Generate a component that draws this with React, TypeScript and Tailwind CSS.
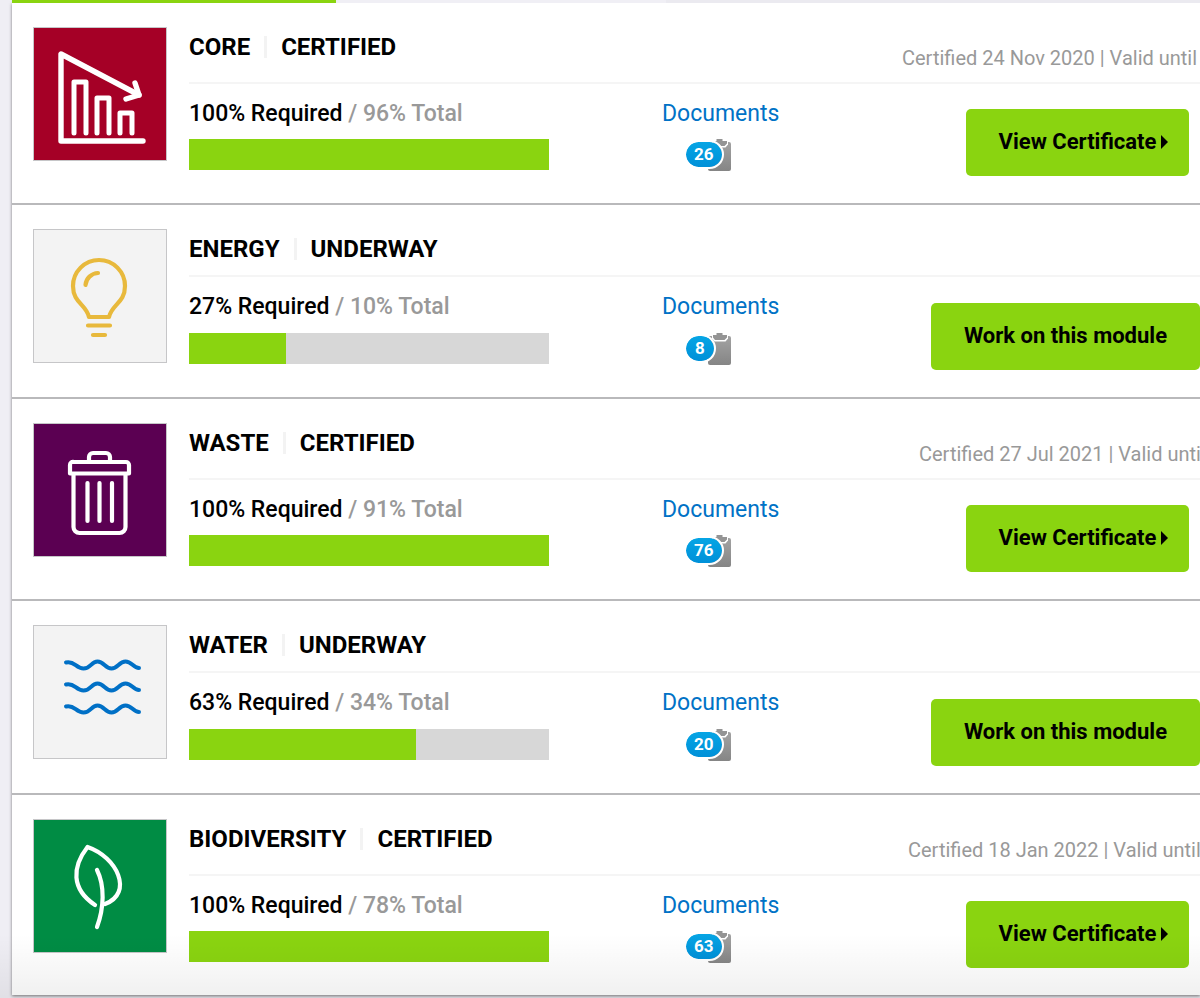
import type { ReactNode } from "react";

type Module = {
  name: string;
  certified?: { text: string; width: string };
  required: number;
  total: number;
  documents: number;
  tile: string;
  icon: ReactNode;
};

const iconProps = {
  className: "block size-full",
  fill: "none",
  strokeLinecap: "round" as const,
  strokeLinejoin: "round" as const,
  "aria-hidden": true,
};

const CoreIcon = () => (
  <svg {...iconProps} viewBox="0 0 132 132" stroke="#fff" strokeWidth="5.4">
    <path d="M105 67 27 26V113H109" />
    <path d="M101 55 105 67 92 71" />
    <path strokeWidth="5" d="M40 105V54H52V105M63 105V70H75V105M86 105V85H98V105" />
  </svg>
);

const EnergyIcon = () => (
  <svg {...iconProps} viewBox="0 0 132 132" stroke="#e8b93c" strokeWidth="4.2">
    <path d="M55 87C52 74 39 73 39 56A26 26 0 0 1 91 56C91 73 78 74 75 87Z" />
    <path d="M51.5 55A13 13 0 0 1 64 43M54 95.5H76M59 105H71" />
  </svg>
);

const WasteIcon = () => (
  <svg {...iconProps} viewBox="0 0 132 132" stroke="#fff" strokeWidth="4.2">
    <path d="M55 37V33A4 4 0 0 1 59 29H72A4 4 0 0 1 76 33V37" />
    <path d="M40 38H92A3 3 0 0 1 95 41V49.5H36V41A3 3 0 0 1 40 38Z" />
    <path d="M39.5 50V103A6 6 0 0 0 45.5 109H85.5A6 6 0 0 0 91.5 103V50" />
    <path d="M53.5 59V97M65.5 59V97M78 59V97" />
  </svg>
);

const WaterIcon = () => (
  <svg {...iconProps} viewBox="0 0 132 132" stroke="#0070c6" strokeWidth="4">
    {[0, 22, 44].map((y) => (
      <path
        key={y}
        transform={`translate(0 ${y})`}
        d="M32 36.5C40 34 42 42.5 49.5 42.5S57 35.5 63.5 35.5 71 42.5 77.5 42.5 85 35.5 91.5 35.5 99 42 105 42"
      />
    ))}
  </svg>
);

const LeafIcon = () => (
  <svg {...iconProps} viewBox="0 0 132 132" stroke="#fff" strokeWidth="4.2">
    <path d="M61 85C37 69 38 47 53.5 27 83 37 100 73 71 84" />
    <path d="M63 50C71 66 70 88 63 107" />
  </svg>
);

const modules: Module[] = [
  {
    name: "CORE",
    certified: { text: "Certified 24 Nov 2020 | Valid until", width: "w-[298px]" },
    required: 100,
    total: 96,
    documents: 26,
    tile: "bg-[#a50026]",
    icon: <CoreIcon />,
  },
  { name: "ENERGY", required: 27, total: 10, documents: 8, tile: "bg-[#f3f3f3]", icon: <EnergyIcon /> },
  {
    name: "WASTE",
    certified: { text: "Certified 27 Jul 2021 | Valid until", width: "w-[281px]" },
    required: 100,
    total: 91,
    documents: 76,
    tile: "bg-[#5b0052]",
    icon: <WasteIcon />,
  },
  { name: "WATER", required: 63, total: 34, documents: 20, tile: "bg-[#f3f3f3]", icon: <WaterIcon /> },
  {
    name: "BIODIVERSITY",
    certified: { text: "Certified 18 Jan 2022 | Valid until", width: "w-[292px]" },
    required: 100,
    total: 78,
    documents: 63,
    tile: "bg-[#008c44]",
    icon: <LeafIcon />,
  },
];

function Documents({ count, gap }: { count: number; gap: string }) {
  return (
    <div className="w-[116px]">
      <a href="#documents" className="block text-[23px] leading-7 text-[#0072c6]">
        Documents
      </a>
      <div className={`relative ml-6 h-8 w-[45px] ${gap}`}>
        <svg className="absolute right-0 top-0 h-8 w-[23px]" viewBox="0 0 23 32" aria-hidden="true">
          <defs>
            <linearGradient id="clip" x2="0" y2="1">
              <stop stopColor="#a3a3a3" />
              <stop offset="1" stopColor="#858585" />
            </linearGradient>
          </defs>
          <rect y="3" width="23" height="29" rx="2" fill="url(#clip)" />
          <path d="M4 2.5H20V5.500L17.500 8.500H6.500L4 5.500Z" fill="#fff" />
          <path d="M5 2H8.5V0H14.5V2H19V4.500L16.500 7H7L5 4.500Z" fill="#949494" />
        </svg>
        <span className="absolute left-0 top-[3px] min-w-7 rounded-full bg-linear-to-b from-[#06a5e5] to-[#0090d8] px-2 text-center text-[17px] leading-[25px] font-bold text-white outline-2 outline-white">
          {count}
        </span>
      </div>
    </div>
  );
}

function ModuleRow({ module }: { module: Module }) {
  const { name, certified, required, total, documents, tile, icon } = module;
  const gap = certified ? "mt-[11px]" : "mt-3";
  return (
    <li className="flex gap-[22px] border-b-2 border-[#b9b9bb] bg-white pl-[21px] last:border-b-0">
      <div className={`mt-6 size-[134px] shrink-0 border border-[#c6c6c8] ${tile}`}>{icon}</div>
      <div className="min-w-0 flex-1">
        <div
          className={`flex justify-between border-b-2 border-[#f5f5f5] whitespace-nowrap ${certified ? "h-[81px]" : "h-[72px]"}`}
        >
          <h2 className="flex h-fit items-center pt-[29px] text-[24px] leading-[30px] font-bold">
            {name}
            <span className="mx-[14px] h-[22px] w-[3px] bg-[#f3f3f3]" />
            {certified ? "CERTIFIED" : "UNDERWAY"}
          </h2>
          {certified && (
            <p className={`overflow-hidden pt-[43px] text-[20px] leading-6 text-[#999] ${certified.width}`}>
              {certified.text}
            </p>
          )}
        </div>
        <div className="flex pb-[27px]">
          <div className="w-[360px] shrink-0 pt-4">
            <p className="text-[23px] leading-7 font-medium">
              {required}% Required <span className="text-[#999]">/ {total}% Total</span>
            </p>
            <div
              role="progressbar"
              aria-label={`${name} required`}
              aria-valuenow={required}
              className={`h-[31px] bg-[#d7d7d7] ${gap}`}
            >
              <div className="h-full bg-[#8ad410]" style={{ width: `${required}%` }} />
            </div>
          </div>
          <div className="ml-[113px] pt-4">
            <Documents count={documents} gap={gap} />
          </div>
          <button
            type="button"
            className={`ml-auto flex h-[67px] items-center justify-center rounded-[5px] bg-[#8ad410] pb-0.5 text-[22px] font-bold whitespace-nowrap ${certified ? "mt-[25px] mr-[11px] w-[223px] pl-3" : "mt-[26px] w-[269px]"}`}
          >
            {certified ? "View Certificate" : "Work on this module"}
            {certified && (
              <svg className="ml-[5px] h-[14px] w-[7px]" viewBox="0 0 7 14" aria-hidden="true">
                <path d="M0 0 7 7 0 14Z" fill="#000" />
              </svg>
            )}
          </button>
        </div>
      </div>
    </li>
  );
}

export default function App() {
  return (
    <main className="relative min-h-screen overflow-hidden bg-[#efeef4] pl-3 font-[Roboto,sans-serif] text-black">
      <div className="flex h-[3px]">
        <div className="w-[324px] bg-[#8ad410]" />
        <div className="w-[330px] bg-[#f0eff5]" />
        <div className="flex-1 bg-[#ebeaf0]" />
      </div>
      <ul className="shadow-[0_1px_3px_rgba(0,0,0,0.5)]">
        {modules.map((m) => (
          <ModuleRow key={m.name} module={m} />
        ))}
      </ul>
      <div className="pointer-events-none absolute inset-x-0 bottom-0 h-16 bg-linear-to-t from-black/6 to-transparent" />
    </main>
  );
}
